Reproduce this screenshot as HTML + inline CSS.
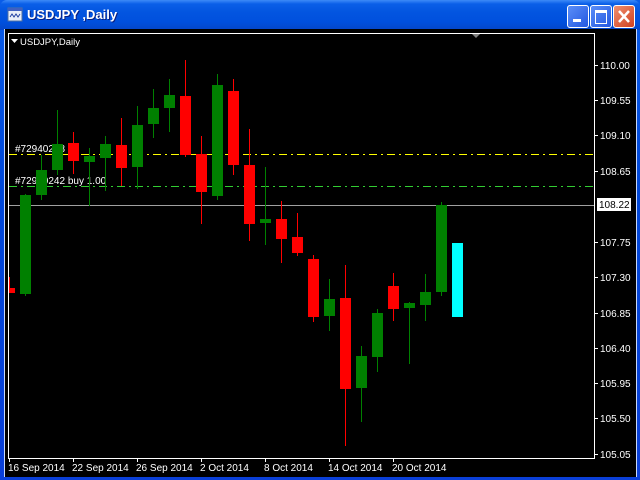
<!DOCTYPE html>
<html><head><style>
html,body{margin:0;padding:0;width:640px;height:480px;overflow:hidden;background:#0a3fd8}
#win{position:absolute;left:0;top:0;width:640px;height:480px;background:linear-gradient(#0a5ce8,#0047d8 40%,#0a3fd8);}
#title{position:absolute;left:0;top:0;width:640px;height:30px;background:linear-gradient(#3d8af7 0,#0a5fe8 4px,#0355e0 12px,#0050dd 22px,#0446c8 30px);border-radius:7px 7px 0 0}
#title span{position:absolute;left:27px;top:7px;font:bold 13px "Liberation Sans",sans-serif;color:#fff;text-shadow:1px 1px #0a1f80}
#body{position:absolute;left:4px;top:29px;width:631px;height:448px;background:#000;border-left:1px solid #c8d8f8;border-right:1px solid #c8d8f8}
.btn{position:absolute;top:5px;width:20px;height:21px;border:1px solid #fff;border-radius:3px;background:linear-gradient(135deg,#5a8ef8,#2458e0)}
svg{position:absolute;left:0;top:0}
</style></head><body>
<div id="win">
<div id="title">
<svg width="20" height="20" style="left:6px;top:6px"><rect x="2" y="2" width="14" height="13" fill="#e8eef8" stroke="#5070a0"/><rect x="2" y="2" width="14" height="3" fill="#4060c0"/><path d="M4 11l2-3 2 3 2-3 2 3 2-3" stroke="#2040a0" fill="none"/></svg>
<span>USDJPY ,Daily</span>
</div>
<div class="btn" style="left:567px"><div style="position:absolute;left:5px;top:13px;width:8px;height:3px;background:#fff"></div></div>
<div class="btn" style="left:590px"><div style="position:absolute;left:4px;top:4px;width:10px;height:10px;border:1px solid #fff;border-top:3px solid #fff"></div></div>
<div class="btn" style="left:613px;background:linear-gradient(135deg,#f09070,#d04020)"><svg width="20" height="21"><path d="M5 5L15 16M15 5L5 16" stroke="#fff" stroke-width="2.5"/></svg></div>
<div id="body"></div>
<svg width="640" height="480" font-family="Liberation Sans, sans-serif" font-size="10">
<rect x="8.5" y="33.5" width="586" height="425" fill="none" stroke="#fff"/>
<line x1="9" y1="154.5" x2="594" y2="154.5" stroke="#ffff00" stroke-dasharray="8,4,2,4"/>
<line x1="9" y1="186.5" x2="594" y2="186.5" stroke="#32cd32" stroke-dasharray="8,4,2,4"/>
<line x1="9" y1="205.5" x2="594" y2="205.5" stroke="#a0a0a0"/>
<text x="15" y="152" fill="#fff">#72940243 tp</text>
<text x="15" y="184" fill="#fff">#72940242 buy 1.00</text>
<text x="20" y="45" fill="#fff" font-size="9.5">USDJPY,Daily</text>
<path d="M11 39h7l-3.5 4z" fill="#fff"/>
<path d="M472 34h8l-4 4z" fill="#808080"/>
<g id="c"></g>
<rect x="597" y="198" width="34" height="13" fill="#fff"/>
<text x="599" y="208" fill="#000">108.22</text>
<g fill="#fff">
<text x="600" y="69">110.00</text><text x="600" y="104">109.55</text><text x="600" y="139">109.10</text><text x="600" y="175">108.65</text>
<text x="600" y="246">107.75</text><text x="600" y="281">107.30</text><text x="600" y="317">106.85</text><text x="600" y="352">106.40</text>
<text x="600" y="387">105.95</text><text x="600" y="422">105.50</text><text x="600" y="458">105.05</text>
<text x="8" y="471">16 Sep 2014</text><text x="72" y="471">22 Sep 2014</text><text x="136" y="471">26 Sep 2014</text>
<text x="200" y="471">2 Oct 2014</text><text x="264" y="471">8 Oct 2014</text><text x="328" y="471">14 Oct 2014</text><text x="392" y="471">20 Oct 2014</text>
</g>
<g stroke="#fff">
<path d="M595 65.5h3M595 100.5h3M595 135.5h3M595 171.5h3M595 242.5h3M595 277.5h3M595 313.5h3M595 348.5h3M595 383.5h3M595 418.5h3M595 454.5h3"/>
<path d="M9.5 459v3M73.5 459v3M137.5 459v3M201.5 459v3M265.5 459v3M329.5 459v3M393.5 459v3"/>
</g>
<g>
<!-- candles -->
<line x1="9.5" y1="277" x2="9.5" y2="293" stroke="#f00"/><rect x="9" y="288" width="6" height="5" fill="#f00"/>
</g>
<g id="cs"></g>
</svg>
<svg width="640" height="480" id="cand"></svg>
<script>
var d=[[1,'g',195,294,194,296],[2,'g',170,195,155,200],[3,'g',144,170,110,175],[4,'r',143,161,132,174],[5,'g',156,162,148,206],[6,'g',144,158,136,191],[7,'r',145,168,118,186],[8,'g',125,167,106,189],[9,'g',108,124,89,138],[10,'g',95,108,79,132],[11,'r',96,155,60,157],[12,'r',154,192,136,224],[13,'g',85,196,74,200],[14,'r',91,165,79,175],[15,'r',165,224,129,241],[16,'g',219,223,167,245],[17,'r',219,239,201,263],[18,'r',237,253,213,256],[19,'r',259,317,255,322],[20,'g',299,316,279,331],[21,'r',298,389,265,446],[22,'g',356,388,346,422],[23,'g',313,357,309,372],[24,'r',286,309,273,321],[25,'g',303,308,302,364],[26,'g',292,305,274,321],[27,'g',205,292,202,296]];
var s='';d.forEach(function(c){var x=9.5+16*c[0],col=c[1]=='g'?'#008000':'#ff0000';
s+='<line x1="'+x+'" y1="'+c[4]+'" x2="'+x+'" y2="'+c[5]+'" stroke="'+col+'"/><rect x="'+(x-5.5)+'" y="'+c[2]+'" width="11" height="'+(c[3]-c[2])+'" fill="'+col+'"/>';});
s+='<rect x="452" y="243" width="11" height="74" fill="#00ffff"/>';
document.getElementById('cand').innerHTML=s;
</script>
</div>
</body></html>
